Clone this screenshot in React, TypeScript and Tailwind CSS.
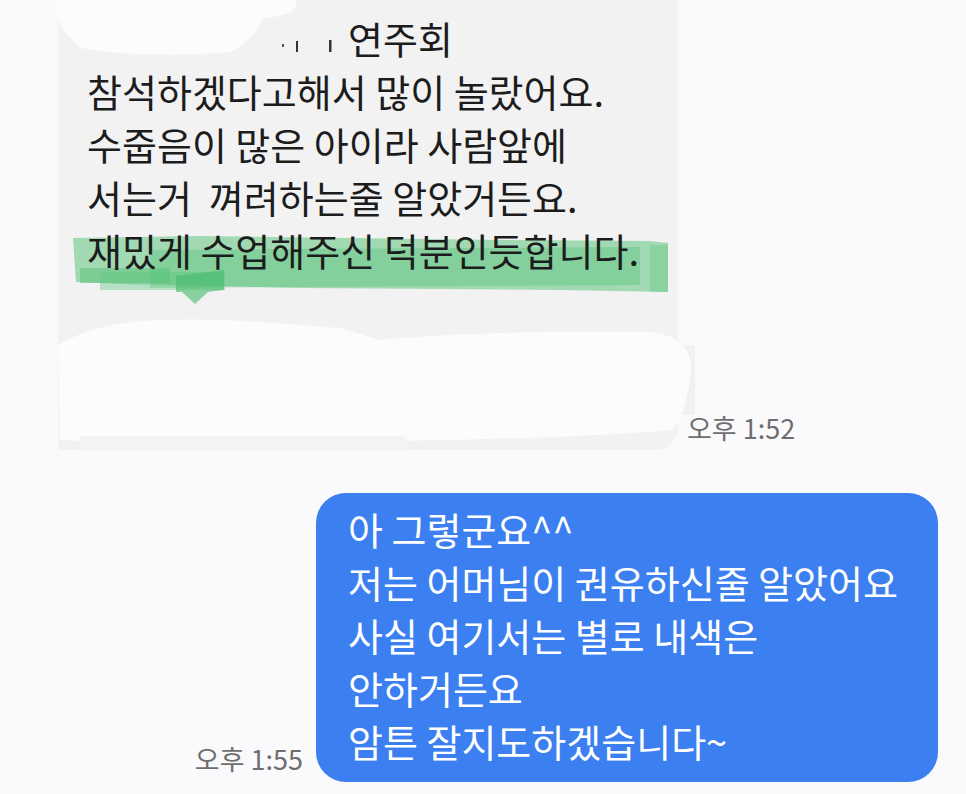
const kr = "font-['Noto_Sans_CJK_KR','Noto_Sans',sans-serif]";

function Highlighter() {
  // 형광펜 자국 (좌표는 말풍선 기준)
  return (
    <svg className="absolute left-0 top-0 pointer-events-none" width="660" height="460" viewBox="58 0 660 460">
      <polygon points="73,238 200,236 500,240 650,241 668,243 668,292 560,290 300,288 120,284 76,282" fill="#5cc57c" fillOpacity="0.55" />
      <polygon points="150,250 640,247 640,285 150,288" fill="#4fbf72" fillOpacity="0.35" />
      <rect x="80" y="268" width="90" height="15" fill="#4fbf72" fillOpacity="0.45" />
      <rect x="100" y="272" width="125" height="18" fill="#5cc57c" fillOpacity="0.4" />
      <polygon points="176,276 224,270 224,290 208,292 195,304 182,292 176,292" fill="#45b96a" fillOpacity="0.6" />
      <rect x="650" y="245" width="18" height="47" fill="#5cc57c" fillOpacity="0.3" />
    </svg>
  );
}

function Erased() {
  // 가려진 부분
  return (
    <svg className="absolute left-0 top-0 pointer-events-none" width="660" height="460" viewBox="58 0 660 460">
      <path d="M58,0 L296,0 C298,10 290,16 262,18 C258,30 250,42 230,52 C190,56 120,56 82,48 C70,40 64,30 58,20 Z" fill="#fcfcfd" />
      <rect x="282" y="44" width="2" height="3" fill="#555" />
      <rect x="296" y="41" width="2" height="11" fill="#333" />
      <rect x="329" y="40" width="2.5" height="12" fill="#333" />
      <rect x="678" y="345" width="17" height="70" fill="#f1f1f2" />
      <path d="M58,345 C80,332 110,322 160,320 C220,318 260,322 340,328 L380,340 C440,334 560,330 650,332 C690,336 694,360 690,380 C686,400 684,418 672,430 C560,440 400,440 180,446 C140,446 100,442 60,440 Z" fill="#fcfcfd" />
      <rect x="78" y="436" width="330" height="14" rx="6" fill="#f3f3f4" />
    </svg>
  );
}

export default function App() {
  return (
    <div className={`w-[966px] h-[794px] overflow-hidden bg-[#fafafc] ${kr}`}>
      {/* 받은 메시지 */}
      <div className="flex items-end gap-[9px]">
        <div className="relative ml-[58px] w-[620px] h-[450px] bg-[#f2f2f3] rounded-br-[22px]">
          <Highlighter />
          <div className="relative pl-[29px] pt-[11px] text-[38px] leading-[53px] text-[#1c1c1c]">
            <div className="pl-[261px]">연주회</div>
            <div>참석하겠다고해서 많이 놀랐어요.</div>
            <div>수줍음이 많은 아이라 사람앞에</div>
            <div>서는거&nbsp; 껴려하는줄 알았거든요.</div>
            <div>재밌게 수업해주신 덕분인듯합니다.</div>
          </div>
          <Erased />
        </div>
        <div className="mb-[2px] text-[27px] text-[#6e6e70] whitespace-nowrap">오후 1:52</div>
      </div>

      {/* 보낸 메시지 */}
      <div className="flex justify-end items-end gap-[13px] pr-[28px] mt-[43px]">
        <div className="mb-[3px] text-[27px] text-[#6e6e70] whitespace-nowrap">오후 1:55</div>
        <div className="w-[622px] h-[289px] bg-[#3b7ff0] rounded-[30px] pl-[32px] pt-[9px] text-[38px] leading-[53px] text-white">
          <div>아 그렇군요^^</div>
          <div>저는 어머님이 권유하신줄 알았어요</div>
          <div>사실 여기서는 별로 내색은</div>
          <div>안하거든요</div>
          <div>암튼 잘지도하겠습니다~</div>
        </div>
      </div>
    </div>
  );
}
